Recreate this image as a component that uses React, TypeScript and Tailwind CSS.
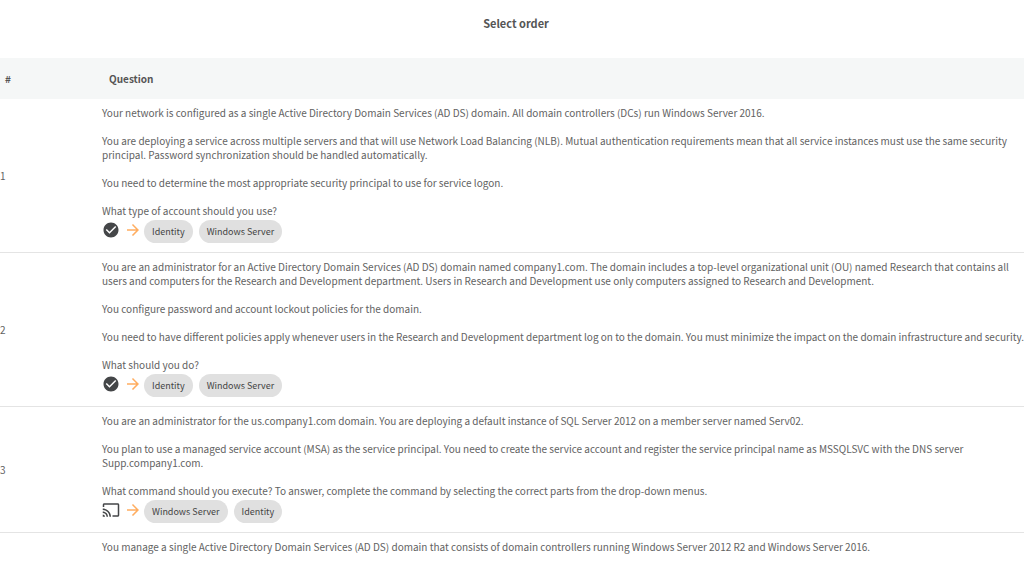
import { MdArrowForward, MdCast, MdCheckCircle } from "react-icons/md";

type Question = {
  id: number;
  kind: "choice" | "simulation";
  paragraphs: string[];
  tags: string[];
};

const questions: Question[] = [
  {
    id: 1,
    kind: "choice",
    paragraphs: [
      "Your network is configured as a single Active Directory Domain Services (AD DS) domain. All domain controllers (DCs) run Windows Server 2016.",
      "You are deploying a service across multiple servers and that will use Network Load Balancing (NLB). Mutual authentication requirements mean that all service instances must use the same security principal. Password synchronization should be handled automatically.",
      "You need to determine the most appropriate security principal to use for service logon.",
      "What type of account should you use?",
    ],
    tags: ["Identity", "Windows Server"],
  },
  {
    id: 2,
    kind: "choice",
    paragraphs: [
      "You are an administrator for an Active Directory Domain Services (AD DS) domain named company1.com. The domain includes a top-level organizational unit (OU) named Research that contains all users and computers for the Research and Development department. Users in Research and Development use only computers assigned to Research and Development.",
      "You configure password and account lockout policies for the domain.",
      "You need to have different policies apply whenever users in the Research and Development department log on to the domain. You must minimize the impact on the domain infrastructure and security.",
      "What should you do?",
    ],
    tags: ["Identity", "Windows Server"],
  },
  {
    id: 3,
    kind: "simulation",
    paragraphs: [
      "You are an administrator for the us.company1.com domain. You are deploying a default instance of SQL Server 2012 on a member server named Serv02.",
      "You plan to use a managed service account (MSA) as the service principal. You need to create the service account and register the service principal name as MSSQLSVC with the DNS server Supp.company1.com.",
      "What command should you execute? To answer, complete the command by selecting the correct parts from the drop-down menus.",
    ],
    tags: ["Windows Server", "Identity"],
  },
  {
    id: 4,
    kind: "choice",
    paragraphs: [
      "You manage a single Active Directory Domain Services (AD DS) domain that consists of domain controllers running Windows Server 2012 R2 and Windows Server 2016.",
    ],
    tags: [],
  },
];

function Tags({ question }: { question: Question }) {
  const Icon = question.kind === "choice" ? MdCheckCircle : MdCast;
  return (
    <div className="mt-0.5 flex items-start">
      <Icon className="mt-px size-[18px] shrink-0 text-[#444648]" aria-hidden="true" />
      <MdArrowForward className="mt-px ml-1 size-[18px] shrink-0 text-[#ffad60]" aria-hidden="true" />
      <ul className="ml-0.5 flex gap-1.5">
        {question.tags.map((tag) => (
          <li
            key={tag}
            className="flex h-[23px] items-center rounded-full bg-[#e0e0e0] px-2 text-[9px] leading-[14px] text-[#444]"
          >
            {tag}
          </li>
        ))}
      </ul>
    </div>
  );
}

export default function App() {
  return (
    <main className="h-screen overflow-hidden bg-white font-['Noto_Sans_CJK_SC',sans-serif] text-[10px] leading-[14px] text-[#626262]">
      <h1 className="pt-4 pb-7 pl-2 text-center text-[11px] leading-[14px] font-bold text-[#555]">Select order</h1>
      <table className="w-full table-fixed border-separate border-spacing-0 text-left">
        <colgroup>
          <col className="w-[102px]" />
          <col />
        </colgroup>
        <thead>
          <tr className="h-[41px] bg-[#f5f7f7] text-[#555]">
            <th scope="col" className="pl-[5px] font-bold">#</th>
            <th scope="col" className="pl-[7px] font-bold">Question</th>
          </tr>
        </thead>
        <tbody>
          {questions.map((question) => (
            <tr key={question.id} className="last:h-40">
              <td className="border-b border-[#e4e4e4] align-middle">{question.id}</td>
              <td className="border-b border-[#e4e4e4] pt-[7px] pb-[9px] align-top">
                <div className="-mr-2 space-y-3.5">
                  {question.paragraphs.map((paragraph) => (
                    <p key={paragraph}>{paragraph}</p>
                  ))}
                </div>
                {question.tags.length > 0 && <Tags question={question} />}
              </td>
            </tr>
          ))}
        </tbody>
      </table>
    </main>
  );
}
